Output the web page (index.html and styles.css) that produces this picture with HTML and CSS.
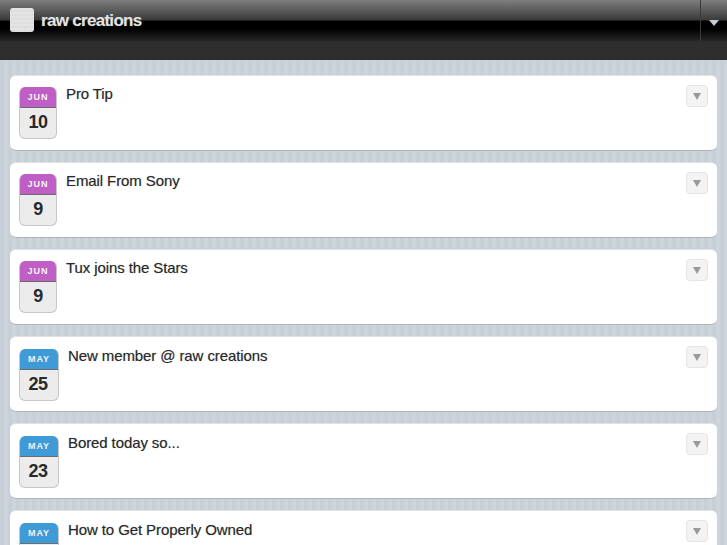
FILE: index.html
```html
<!DOCTYPE html>
<html>

<head>
  <meta name="viewport" content="width=device-width, initial-scale=1">
  <link rel="stylesheet" href="styles.css">
</head>

<body>

  <div class="header">
    <div class="logo"></div>
    <div class="brand">raw creations</div>
    <div class="menu-btn"><span class="arrow-light"></span></div>
  </div>
  <div class="subbar"></div>

  <div class="list">
    <div class="card">
      <div class="date"><div class="month june">JUN</div><div class="day">10</div></div>
      <div class="title">Pro Tip</div>
      <div class="toggle"><span class="arrow"></span></div>
    </div>
    <div class="card">
      <div class="date"><div class="month june">JUN</div><div class="day">9</div></div>
      <div class="title">Email From Sony</div>
      <div class="toggle"><span class="arrow"></span></div>
    </div>
    <div class="card">
      <div class="date"><div class="month june">JUN</div><div class="day">9</div></div>
      <div class="title">Tux joins the Stars</div>
      <div class="toggle"><span class="arrow"></span></div>
    </div>
    <div class="card">
      <div class="date date-wide"><div class="month may">MAY</div><div class="day">25</div></div>
      <div class="title">New member @ raw creations</div>
      <div class="toggle"><span class="arrow"></span></div>
    </div>
    <div class="card">
      <div class="date date-wide"><div class="month may">MAY</div><div class="day">23</div></div>
      <div class="title">Bored today so...</div>
      <div class="toggle"><span class="arrow"></span></div>
    </div>
    <div class="card">
      <div class="date date-wide"><div class="month may">MAY</div><div class="day">20</div></div>
      <div class="title">How to Get Properly Owned</div>
      <div class="toggle"><span class="arrow"></span></div>
    </div>
  </div>

</body>

</html>
```
FILE: styles.css
```css
html,
body {
  height: 100%;
  overflow: hidden;
}

body {
  margin: 0;
  font-family: "Liberation Sans", Arial, Helvetica, sans-serif;
  background-color: #c9d1d9;
  background-image: repeating-linear-gradient(90deg, #c7cfd7 0, #c7cfd7 4px, #cdd4dc 4px, #cdd4dc 8px);
}

.header {
  height: 42px;
  display: flex;
  align-items: flex-start;
  background: linear-gradient(#7e7e7e 0, #3a3a3a 20px, #000 21px, #000 29px, #262626 41px, #333 42px);
}

.logo {
  width: 24px;
  height: 24px;
  margin: 8px 0 0 10px;
  border-radius: 3px;
  background: repeating-linear-gradient(#e4e4e4 0, #e4e4e4 2px, #dedede 2px, #dedede 4px);
}

.brand {
  margin: 11px 0 0 7px;
  font-size: 17px;
  line-height: 20px;
  font-weight: bold;
  letter-spacing: -0.7px;
  color: #e2e2e2;
  text-shadow: 0 0 1px rgba(255, 255, 255, 0.3);
}

.menu-btn {
  margin-left: auto;
  width: 26px;
  height: 41px;
  border-left: 1px solid #3a3a3a;
  display: flex;
  justify-content: center;
}

.arrow-light {
  margin-top: 20px;
  height: 0;
  border-left: 5px solid transparent;
  border-right: 5px solid transparent;
  border-top: 6px solid #c3cdd6;
}

.subbar {
  height: 18px;
  background-color: #2e2e2e;
}

.list {
  display: flex;
  flex-direction: column;
  gap: 11px;
  padding: 15px 10px 0;
}

.card {
  height: 76px;
  flex: none;
  box-sizing: border-box;
  display: flex;
  align-items: flex-start;
  background-color: #fff;
  border-radius: 6px;
  border-top: 1px solid #dfe3e6;
  border-bottom: 1px solid #aeb4b9;
  padding: 11px 9px 0;
}

.date {
  width: 38px;
  height: 52px;
  box-sizing: border-box;
  flex: none;
  border: 1px solid #c6c6c6;
  border-top: none;
  border-radius: 6px;
  background-color: #ececec;
  overflow: hidden;
  text-align: center;
}

.date-wide {
  width: 40px;
  margin-top: 1px;
}

.date-wide .day {
  padding-right: 2px;
}

.month {
  height: 20px;
  line-height: 20px;
  font-size: 9px;
  font-weight: bold;
  letter-spacing: 1px;
  color: #f4f4f4;
  border-bottom: 1px solid #6b6b6b;
  margin: 0 -1px;
}

.june {
  background-color: #bf5fc6;
}

.may {
  background-color: #3f9ad8;
}

.day {
  font-size: 18px;
  font-weight: bold;
  line-height: 28px;
  color: #2a2a2a;
  letter-spacing: -0.5px;
}

.title {
  margin: -2px 0 0 9px;
  font-size: 15px;
  line-height: 18px;
  letter-spacing: -0.1px;
  color: #2a2a2a;
  text-shadow: 0 0 1px rgba(0, 0, 0, 0.35);
}

.date-wide + .title {
  margin-top: -1px;
}

.toggle {
  margin-left: auto;
  margin-top: -2px;
  width: 22px;
  height: 22px;
  box-sizing: border-box;
  border: 1px solid #e4e4e4;
  border-radius: 4px;
  background-color: #f3f3f3;
  display: flex;
  justify-content: center;
  align-items: center;
}

.arrow {
  border-left: 4px solid transparent;
  border-right: 4px solid transparent;
  border-top: 7px solid #9a9a9a;
}
```
